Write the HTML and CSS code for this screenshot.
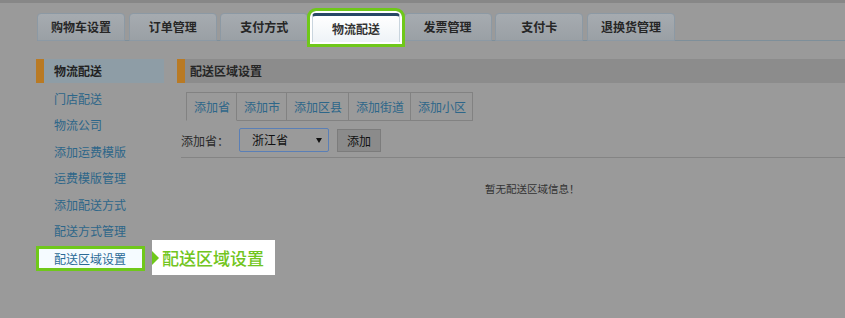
FILE: index.html
```html
<html>
    <head>
        <meta charset="utf-8">
        <title>配送区域设置</title>
        <link rel="stylesheet" href="styles.css">
    </head>
    <body>
        <div class="topbar"></div>

        <div class="tab">
            <div class="tablink">购物车设置</div>
            <div class="tablink">订单管理</div>
            <div class="tablink">支付方式</div>
            <div class="tablink active">物流配送</div>
            <div class="tablink">发票管理</div>
            <div class="tablink">支付卡</div>
            <div class="tablink">退换货管理</div>
        </div>

        <div class="content">
            <div class="sidebar">
                <div class="side-head">物流配送</div>
                <div class="side-item">门店配送</div>
                <div class="side-item">物流公司</div>
                <div class="side-item">添加运费模版</div>
                <div class="side-item">运费模版管理</div>
                <div class="side-item">添加配送方式</div>
                <div class="side-item">配送方式管理</div>
                <div class="side-item current">配送区域设置
                    <div class="callout">配送区域设置</div>
                </div>
            </div>

            <div class="main">
                <div class="main-head">配送区域设置</div>

                <div class="subtabs">
                    <div class="subtab selected">添加省</div>
                    <div class="subtab">添加市</div>
                    <div class="subtab">添加区县</div>
                    <div class="subtab">添加街道</div>
                    <div class="subtab">添加小区</div>
                </div>

                <div class="form-row">
                    <span class="form-label">添加省：</span>
                    <div class="select">浙江省<span class="caret"></span></div>
                    <div class="btn">添加</div>
                </div>

                <p class="empty">暂无配送区域信息！</p>
            </div>
        </div>
    </body>
</html>
```

FILE: styles.css
```css
body {
    margin: 0;
    font-family: "Noto Sans CJK SC", "Noto Sans", sans-serif;
    font-size: 12px;
    color: #222;
    background-color: #9a9a9a;
}

.topbar {
    height: 3px;
    background-color: #878787;
}

/* top tabs */
.tab {
    display: flex;
    gap: 3.67px;
    margin: 10px 0 0 37px;
    height: 27px;
    border-bottom: 1px solid #7e8f9a;
}

.tablink {
    box-sizing: border-box;
    width: 88px;
    height: 28px;
    border: 1px solid #8c99a4;
    border-radius: 4px 4px 0 0;
    background: linear-gradient(#a6abb0, #9aa0a5);
    text-align: center;
    line-height: 26px;
    font-weight: bold;
    color: #262626;
}

.tablink.active {
    height: 29px;
    border: 1px solid #c9d5de;
    border-top: 3px solid #284866;
    border-bottom: none;
    background: linear-gradient(#ffffff, #eef3f7);
    line-height: 25px;
    color: #333;
    box-shadow: 0 0 0 2px #fff;
    outline: 3px solid #6fc81a;
    outline-offset: 2px;
    position: relative;
    z-index: 1;
}

/* page body */
.content {
    display: flex;
    gap: 13px;
    margin-top: 18px;
    padding-left: 36px;
}

.sidebar {
    width: 128px;
    flex-shrink: 0;
}

.side-head {
    height: 24px;
    line-height: 24px;
    border-left: 8px solid #b97a24;
    background-color: #8e9da6;
    padding-left: 10px;
    font-weight: bold;
    color: #222;
    margin-bottom: 2.75px;
}

.side-item {
    height: 26.5px;
    line-height: 26.5px;
    padding-left: 18px;
    color: #2d6689;
}

.side-item.current {
    position: relative;
    box-sizing: border-box;
    width: 109px;
    height: 25px;
    margin-top: 1px;
    line-height: 19px;
    padding-left: 15px;
    border: 3px solid #6fc81a;
    background-color: #f5fbff;
    color: #2a6a96;
}

.callout {
    position: absolute;
    left: 113px;
    top: -9px;
    width: 113px;
    height: 35px;
    padding-left: 10px;
    background-color: #fff;
    color: #72c520;
    font-size: 17px;
    font-weight: 500;
    line-height: 35px;
    white-space: nowrap;
}

.callout::before {
    content: "";
    position: absolute;
    left: 0;
    top: 11px;
    border-left: 7px solid #6fc81a;
    border-top: 7px solid transparent;
    border-bottom: 7px solid transparent;
}

.main {
    flex: 1;
}

.main-head {
    height: 24px;
    line-height: 24px;
    border-left: 8px solid #b97a24;
    background-color: #8c8c8c;
    padding-left: 5px;
    font-weight: bold;
    color: #262626;
}

.subtabs {
    display: flex;
    margin: 9px 0 0 9px;
}

.subtab {
    height: 27px;
    line-height: 27px;
    padding: 0 6px 0 7px;
    border: 1px solid #828282;
    border-left: none;
    color: #2d6689;
}

.subtab.selected {
    border-left: 1px solid #828282;
    border-bottom-color: transparent;
}

.form-row {
    display: flex;
    align-items: center;
    margin: 7px 0 0 4px;
    padding-bottom: 5px;
    border-bottom: 1px solid #848484;
}

.form-label {
    width: 58px;
    color: #2a2a2a;
}

.select {
    box-sizing: border-box;
    position: relative;
    width: 90px;
    height: 24px;
    line-height: 22px;
    padding-left: 12px;
    border: 1px solid #5a7fb6;
    border-radius: 2px;
    color: #111;
}

.caret {
    position: absolute;
    right: 6px;
    top: 9px;
    border-top: 5px solid #111;
    border-left: 3px solid transparent;
    border-right: 3px solid transparent;
}

.btn {
    box-sizing: border-box;
    width: 44px;
    height: 23px;
    line-height: 21px;
    margin-left: 8px;
    text-align: center;
    border: 1px solid #7c7c7c;
    background-color: #8b8b8b;
    color: #111;
}

.empty {
    margin: 23px 0 0 308px;
    font-size: 10.5px;
    color: #333;
}
```
